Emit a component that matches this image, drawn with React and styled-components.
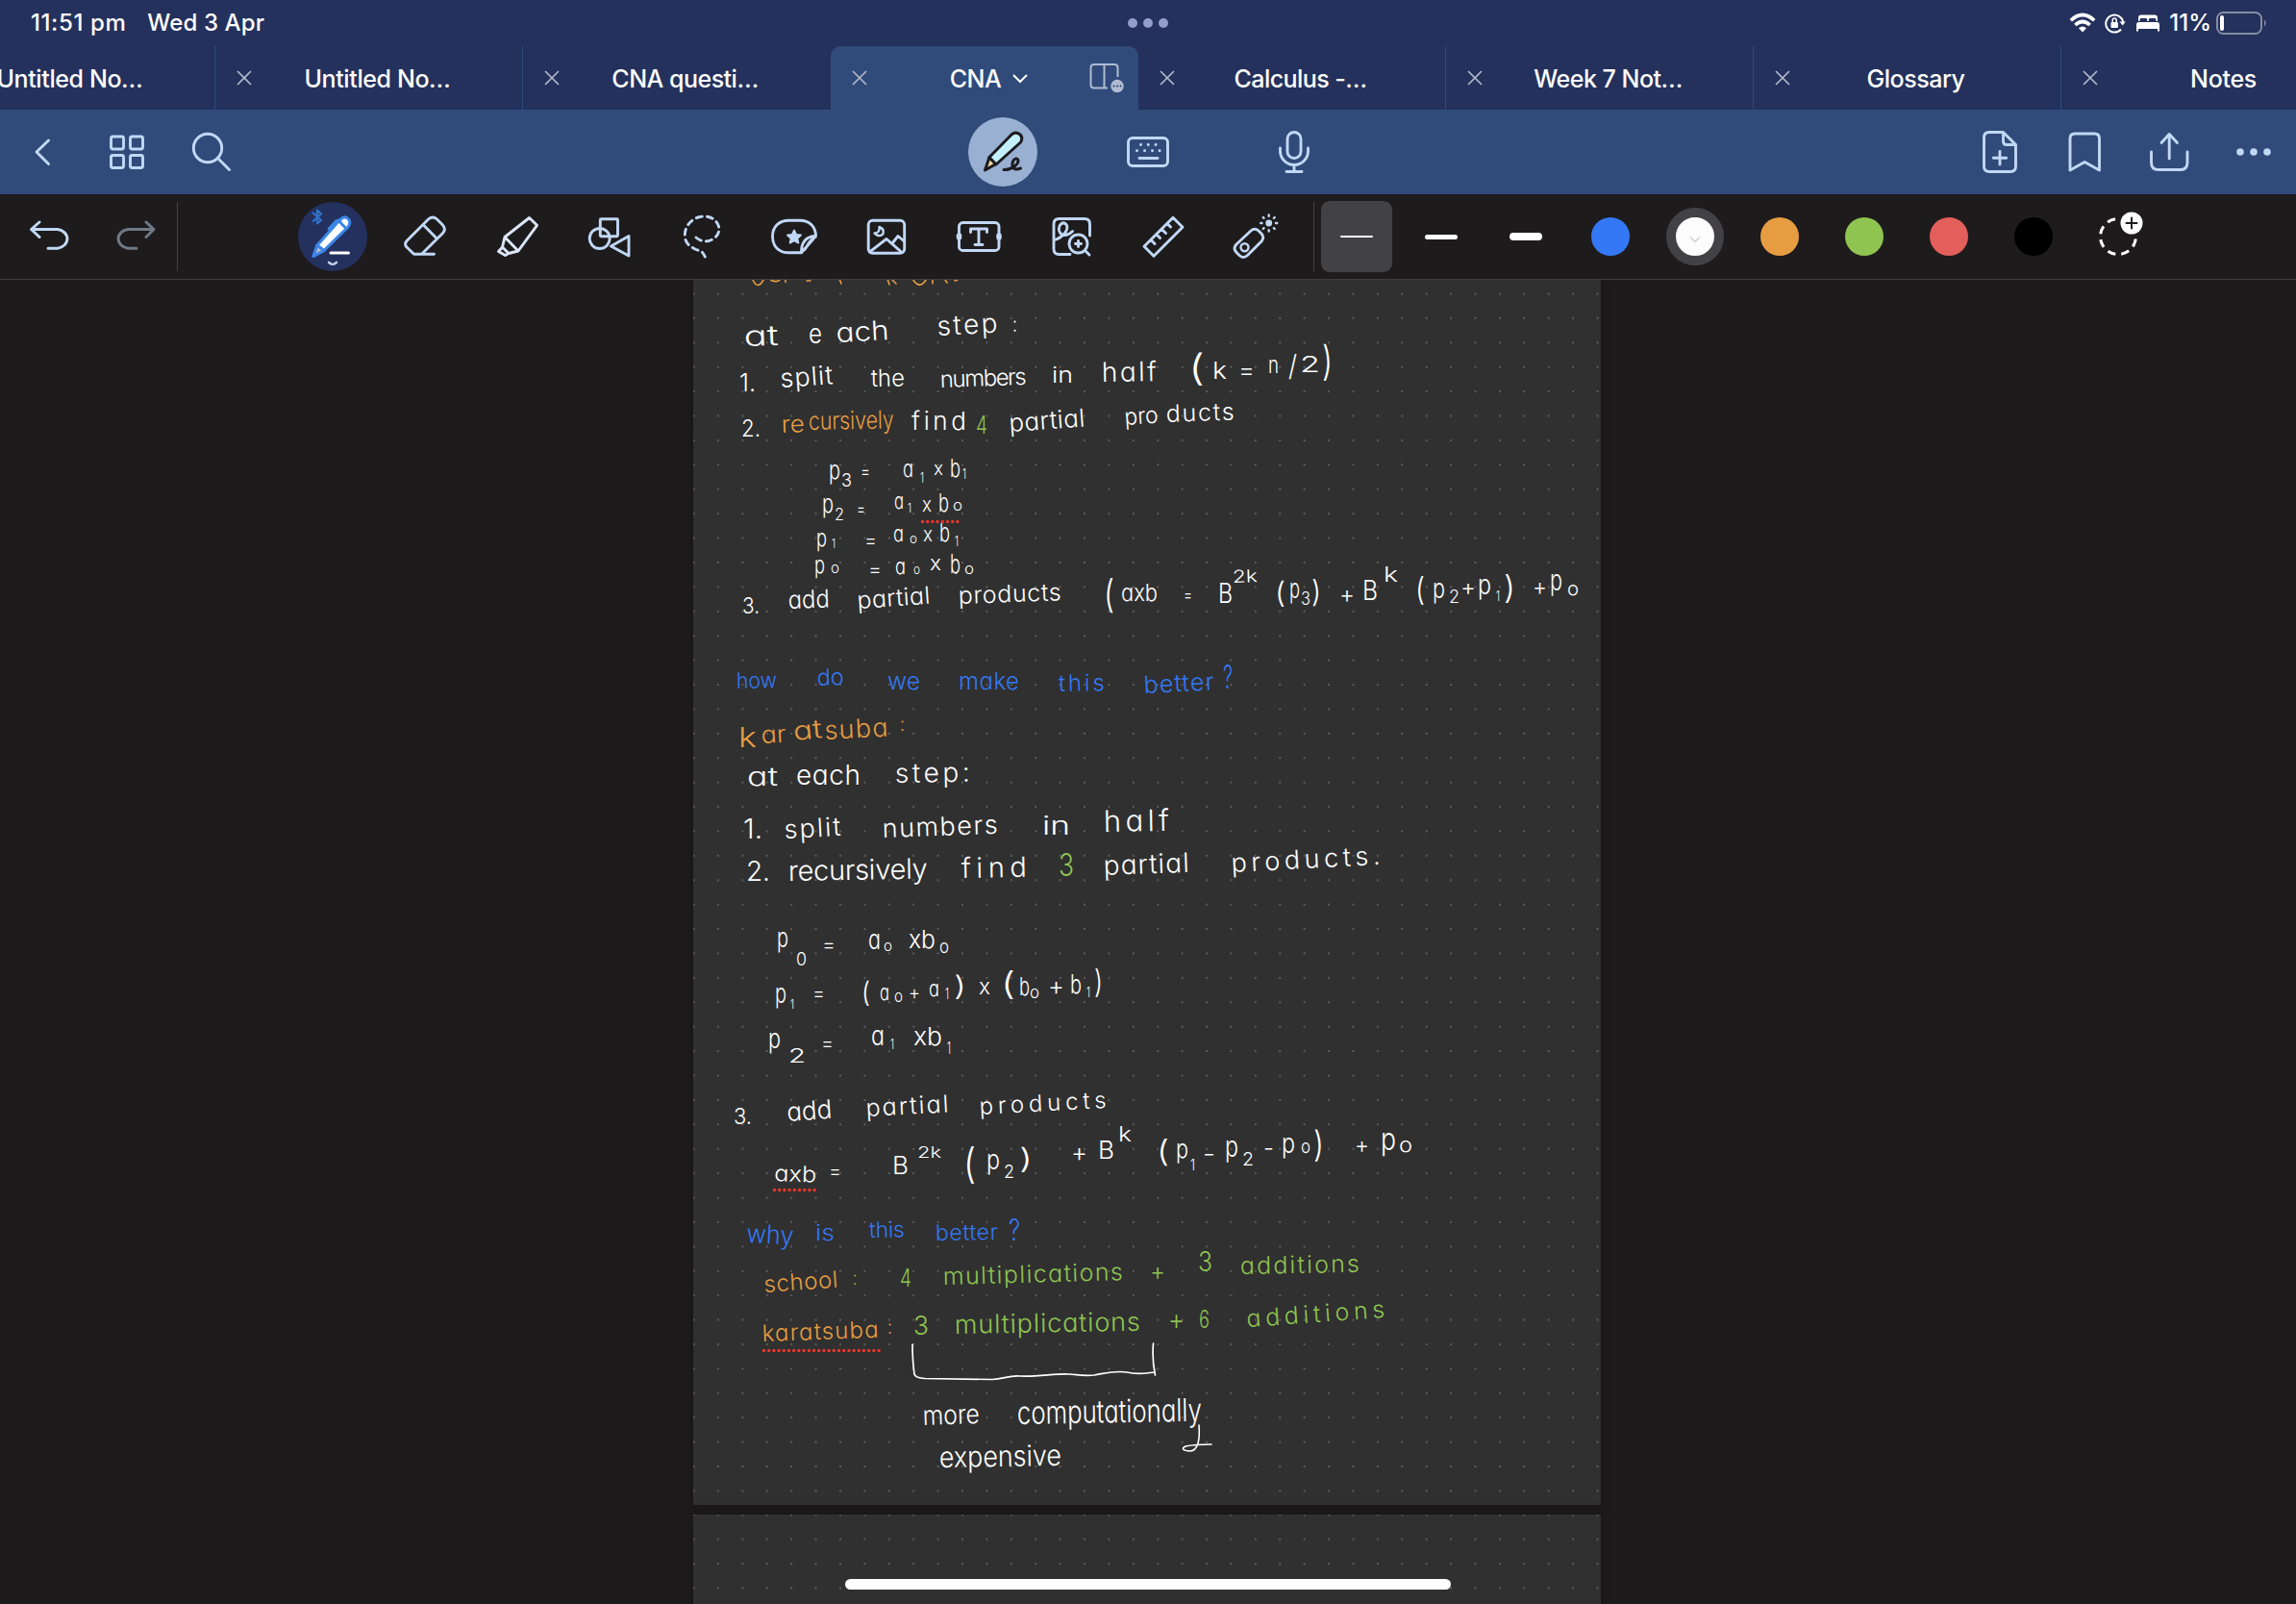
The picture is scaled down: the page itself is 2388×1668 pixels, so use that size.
import React from "react";
import styled, { createGlobalStyle, css } from "styled-components";

const c = {
  navy: "#24315c",
  blue: "#304b7a",
  dark: "#1e1b1c",
  page: "#303030",
  ice: "#c1d8f5",
  white: "#fdfdfd",
  inkBlue: "#3478f5",
  orange: "#e69d42",
  green: "#8fc450",
  red: "#e35f5b",
};

const Global = createGlobalStyle`
  html, body { margin: 0; background: ${c.dark}; }
  * { box-sizing: border-box; }
  svg { display: block; }
`;

const Screen = styled.div`
  width: 2388px;
  height: 1668px;
  display: flex;
  flex-direction: column;
  overflow: hidden;
  background: ${c.dark};
  color: #fff;
  font-family: Inter, "Liberation Sans", sans-serif;
`;

/* ---------- status bar ---------- */
const StatusBar = styled.header`
  height: 48px;
  flex: none;
  display: grid;
  grid-template-columns: 1fr auto 1fr;
  align-items: center;
  background: ${c.navy};
  padding: 0 29px 0 32px;
  font-size: 24px;
  font-weight: 500;
  line-height: 48px;
`;
const Clock = styled.div`
  display: flex;
  gap: 22px;
  white-space: nowrap;
`;
const Time = styled.span`
  letter-spacing: ${(p) => p.$track || 0}px;
`;
const Multitask = styled.div`
  display: flex;
  gap: 6px;
  transform: translateX(-2px);
`;
const TaskDot = styled.i`
  width: 10px;
  height: 10px;
  border-radius: 50%;
  background: #959dcb;
`;
const Indicators = styled.div`
  display: flex;
  justify-content: flex-end;
  align-items: center;
`;
const Percent = styled.span`
  margin: 0 5px 0 9px;
`;
const Gap = styled.i`
  width: ${(p) => p.$w}px;
`;

/* ---------- tabs ---------- */
const TabStrip = styled.nav`
  height: 66px;
  flex: none;
  display: flex;
  margin-left: -96px;
  background: ${c.navy};
`;
const TabBox = styled.div`
  width: 320px;
  flex: none;
  display: flex;
  align-items: center;
  border-right: ${(p) => (p.$line ? "1px solid #2f4b7a" : "1px solid transparent")};
  ${(p) =>
    p.$active &&
    css`
      background: ${c.blue};
      border-radius: 10px 10px 0 0;
      border-right: 0;
    `}
`;
const Close = styled.div`
  width: 60px;
  display: flex;
  justify-content: center;
`;
const Title = styled.div`
  flex: 1;
  display: flex;
  align-items: center;
  justify-content: center;
  gap: 12px;
  padding: 2px ${(p) => (p.$active ? 0 : 42)}px 0 0;
  font-size: 25px;
  font-weight: 500;
  letter-spacing: ${(p) => p.$track}px;
  white-space: nowrap;
`;
const PanelSlot = styled.div`
  width: 51px;
  padding-top: 1px;
`;

/* ---------- navigation bar ---------- */
const NavBar = styled.div`
  height: 88px;
  flex: none;
  display: grid;
  grid-template-columns: 1fr auto 1fr;
  align-items: center;
  background: ${c.blue};
  color: ${c.ice};
`;
const NavGroup = styled.div`
  display: flex;
  justify-content: ${(p) => p.$align || "flex-start"};
`;
const Cell = styled.button`
  width: ${(p) => p.$w}px;
  height: 74px;
  padding: 0;
  border: 0;
  background: none;
  color: inherit;
  display: flex;
  align-items: center;
  justify-content: center;
`;
const Halo = styled.span`
  width: 72px;
  height: 72px;
  border-radius: 50%;
  background: ${(p) => p.$bg};
`;

/* ---------- tool bar ---------- */
const ToolBar = styled.div`
  height: 89px;
  flex: none;
  display: flex;
  align-items: center;
  background: ${c.dark};
  border-bottom: 1px solid #3f3d3e;
  color: ${c.ice};
`;
const History = styled.div`
  display: flex;
  width: 184px;
  padding-left: 8px;
`;
const Rule = styled.i`
  width: 1px;
  height: 72px;
  background: #434142;
`;
const Tools = styled.div`
  display: flex;
  padding: 0 12px 0 113px;
`;
const Stroke = styled.i`
  width: 34px;
  height: ${(p) => p.$h}px;
  border-radius: ${(p) => p.$h / 2}px;
  background: #fff;
`;
const StrokeSlot = styled.span`
  width: 74px;
  height: 74px;
  border-radius: 9px;
  display: flex;
  align-items: center;
  justify-content: center;
  background: ${(p) => (p.$on ? "#424143" : "transparent")};
`;
const Swatch = styled.span`
  width: ${(p) => (p.$on ? 60 : 40)}px;
  height: ${(p) => (p.$on ? 60 : 40)}px;
  border-radius: 50%;
  border: ${(p) => (p.$on ? "10px solid #424244" : "0")};
  background: ${(p) => p.$color};
  display: flex;
  align-items: center;
  justify-content: center;
`;

/* ---------- notebook ---------- */
const Canvas = styled.main`
  flex: 1;
  position: relative;
  display: flex;
  flex-direction: column;
  align-items: center;
  gap: 10px;
  overflow: hidden;
  padding-right: 2px;
`;
const Sheet = styled.section`
  width: 944px;
  height: ${(p) => p.$h}px;
  flex: none;
  background-color: ${c.page};
  background-image: radial-gradient(circle, #626262 0.6px, transparent 1.5px);
  background-size: 25.41px 25.41px;
  background-position: -12.2px ${(p) => p.$dotY}px;
  box-shadow: 0 0 12px rgba(0, 0, 0, 0.25);
`;
const HomeBar = styled.i`
  position: absolute;
  left: 879px;
  bottom: 15px;
  width: 630px;
  height: 11px;
  border-radius: 6px;
  background: #fff;
`;
const Ink = styled.svg`
  font-family: Inter, "Liberation Sans", sans-serif;
  font-weight: 300;
  font-feature-settings: "cv11", "kern";
`;

/* Each word: text, left, baseline, width, size, slope */
const white = [
  ["at", 774, 360, 36, 29, -2], ["e", 841, 357, 14, 28], ["ach", 870, 356, 55, 28, -3],
  ["step", 975, 349, 63, 28, -3], [":", 1053, 345, 5, 22],
  ["1.", 769, 407, 17, 26], ["split", 812, 403, 55, 27, -4], ["the", 906, 402, 35, 25, -1],
  ["numbers", 978, 403, 90, 24, -2], ["in", 1094, 398, 22, 23], ["half", 1146, 397, 57, 28, -1],
  ["(", 1236, 396, 17, 38], ["k", 1261, 394, 15, 24], ["=", 1288, 394, 17, 26], ["n", 1319, 388, 11, 24],
  ["/", 1340, 391, 9, 30], ["2", 1352, 387, 21, 23], [")", 1375, 390, 11, 42],
  ["2.", 771, 454, 20, 24], ["find", 948, 447, 57, 26], ["partial", 1050, 449, 79, 26, -4],
  ["pro", 1170, 442, 35, 24, -4], ["ducts", 1213, 439, 71, 25, -2],
  ["p", 862, 498, 12, 26], ["3", 875, 506, 11, 19], ["=", 895, 497, 10, 20], ["a", 939, 496, 11, 24],
  ["1", 957, 502, 4, 14], ["x", 971, 494, 10, 20], ["b", 988, 496, 11, 26], ["1", 1001, 498, 4, 14],
  ["p", 855, 533, 12, 26], ["2", 868, 541, 10, 17], ["=", 891, 536, 9, 20], ["a", 930, 529, 10, 23],
  ["1", 944, 533, 4, 13], ["x", 959, 532, 10, 22], ["b", 976, 532, 11, 26], ["o", 991, 531, 10, 16],
  ["p", 849, 568, 11, 25], ["1", 865, 570, 4, 13], ["=", 899, 569, 13, 21], ["a", 929, 563, 11, 23],
  ["o", 946, 565, 8, 14], ["x", 960, 563, 10, 21], ["b", 977, 563, 11, 26], ["1", 993, 568, 4, 15],
  ["p", 847, 596, 11, 25], ["o", 864, 596, 9, 16], ["=", 903, 599, 14, 20], ["a", 931, 597, 11, 23],
  ["o", 950, 597, 7, 14], ["x", 967, 593, 12, 22], ["b", 988, 596, 11, 27], ["o", 1003, 597, 10, 16],
  ["3.", 772, 638, 18, 23], ["add", 820, 633, 43, 26, -2], ["partial", 892, 633, 76, 25, -4],
  ["products", 997, 628, 107, 25, -2], ["(", 1148, 632, 11, 40], ["axb", 1166, 625, 38, 24],
  ["=", 1231, 625, 9, 19], ["B", 1267, 627, 15, 28], ["2k", 1282, 606, 26, 18, -2], ["(", 1326, 627, 11, 30],
  ["p", 1341, 622, 11, 28], ["3", 1353, 629, 10, 18], [")", 1364, 626, 10, 31], ["+", 1393, 627, 16, 25],
  ["B", 1417, 624, 16, 28], ["k", 1439, 605, 15, 21], ["(", 1472, 624, 10, 33], ["p", 1490, 622, 13, 28],
  ["2", 1507, 627, 11, 18], ["+", 1519, 619, 16, 24], ["p", 1537, 618, 14, 29], ["1", 1556, 625, 4, 15],
  [")", 1564, 622, 12, 33], ["+", 1594, 619, 15, 25], ["p", 1612, 614, 13, 30], ["o", 1630, 619, 12, 20],

  ["at", 777, 817, 32, 26], ["each", 828, 816, 67, 28], ["step:", 931, 814, 78, 28, -1],
  ["1.", 773, 872, 20, 29], ["split", 816, 872, 59, 27, -3], ["numbers", 918, 871, 120, 27, -2],
  ["in", 1084, 868, 29, 26], ["half", 1148, 865, 68, 31, -1],
  ["2.", 776, 916, 25, 28], ["recursively", 820, 916, 145, 29, -1], ["find", 1000, 913, 68, 29, -1],
  ["partial", 1148, 910, 89, 28, -2], ["products.", 1281, 907, 155, 27, -3],
  ["p", 808, 985, 12, 28], ["0", 828, 1004, 11, 19], ["=", 855, 990, 14, 22], ["a", 903, 987, 13, 28],
  ["o", 919, 989, 9, 15], ["xb", 945, 986, 28, 26], ["o", 977, 991, 10, 19],
  ["p", 806, 1043, 12, 28], ["1", 822, 1049, 4, 13], ["=", 845, 1040, 13, 21], ["(", 896, 1042, 9, 29],
  ["a", 915, 1040, 10, 23], ["o", 930, 1042, 9, 18], ["+", 945, 1039, 12, 21], ["a", 966, 1036, 11, 23],
  ["1", 983, 1039, 4, 16], [")", 992, 1035, 13, 28], ["x", 1018, 1034, 12, 23], ["(", 1041, 1034, 15, 33],
  ["b", 1060, 1035, 11, 26], ["o", 1071, 1038, 10, 18], ["+", 1090, 1035, 17, 27], ["b", 1113, 1033, 12, 27],
  ["1", 1130, 1037, 4, 15], [")", 1138, 1032, 9, 33],
  ["p", 799, 1090, 13, 28], ["2", 820, 1105, 18, 20], ["=", 854, 1092, 13, 21], ["a", 906, 1087, 14, 29],
  ["1", 926, 1091, 4, 14], ["xb", 950, 1087, 30, 26], ["1", 985, 1096, 4, 17],

  ["3.", 763, 1169, 19, 23], ["add", 819, 1166, 47, 27, -4], ["partial", 901, 1161, 86, 25, -3],
  ["products", 1019, 1159, 132, 24, -3], ["axb", 805, 1228, 44, 23, 2], ["=", 862, 1225, 13, 21],
  ["B", 928, 1221, 17, 25], ["2k", 954, 1204, 25, 16], ["(", 1002, 1225, 13, 43], ["p", 1026, 1216, 14, 29],
  ["2", 1044, 1225, 11, 19], [")", 1060, 1215, 14, 29], ["+", 1114, 1208, 17, 27], ["B", 1142, 1205, 17, 26],
  ["k", 1163, 1187, 14, 21], ["(", 1203, 1208, 13, 31], ["p", 1223, 1204, 13, 27], ["1", 1238, 1217, 5, 16],
  ["-", 1251, 1208, 13, 24], ["p", 1274, 1203, 14, 30], ["2", 1292, 1212, 12, 19], ["-", 1314, 1202, 11, 24],
  ["p", 1333, 1199, 14, 29], ["o", 1353, 1199, 10, 19], [")", 1366, 1203, 11, 37], ["+", 1409, 1199, 15, 24],
  ["p", 1436, 1196, 16, 33], ["o", 1455, 1198, 14, 21],
  ["more", 960, 1482, 59, 28, -2], ["computationally", 1058, 1481, 192, 33, -1],
  ["expensive", 977, 1526, 127, 30, -1],
];
const blue = [
  ["how", 766, 716, 42, 23, -1], ["do", 850, 713, 28, 24, -2], ["we", 923, 717, 34, 25], ["make", 997, 717, 63, 24],
  ["this", 1101, 719, 48, 24, -1], ["better", 1190, 721, 73, 25, -3], ["?", 1272, 716, 10, 34],
  ["why", 776, 1292, 49, 27, 3], ["is", 848, 1290, 20, 23], ["this", 904, 1287, 37, 23, -1],
  ["better", 973, 1290, 65, 23, -1], ["?", 1049, 1290, 12, 31],
];
const orange = [
  ["re", 813, 450, 24, 25, -2], ["cursively", 841, 447, 89, 26, -1],
  ["k", 768, 777, 19, 29], ["ar", 792, 773, 26, 25, -3], ["at", 826, 770, 30, 27, -6], ["suba", 858, 769, 66, 27, -3], [":", 936, 760, 5, 20],
  ["school", 795, 1344, 77, 24, -4], [":", 887, 1336, 4, 20],
  ["karatsuba", 793, 1395, 121, 24, -2], [":", 923, 1387, 5, 20],
];
const green = [
  ["4", 1015, 451, 12, 26],
  ["3", 1101, 911, 16, 33],
  ["4", 936, 1338, 12, 26], ["multiplications", 981, 1336, 187, 25, -1.5], ["+", 1196, 1331, 16, 26],
  ["3", 1246, 1322, 15, 28], ["additions", 1290, 1325, 124, 25, -1],
  ["3", 950, 1388, 16, 27], ["multiplications", 993, 1387, 193, 27, -1], ["+", 1215, 1383, 17, 30],
  ["6", 1247, 1381, 11, 25], ["additions", 1297, 1380, 144, 25, -4],
];

const stretched = ["more", "computationally", "expensive", "cursively"];
function Word({ w }) {
  const [text, x, y, width, size, slope = 0] = w;
  const stretch = text.length <= 3 || stretched.includes(text);
  return (
    <text
      x={x}
      y={y}
      fontSize={size}
      textLength={width}
      lengthAdjust={stretch ? "spacingAndGlyphs" : "spacing"}
      transform={slope ? `rotate(${slope} ${x} ${y})` : undefined}
    >
      {text}
    </text>
  );
}
const Words = ({ list, color }) => (
  <g fill={color}>{list.map((w, i) => <Word key={i} w={w} />)}</g>
);

function Handwriting() {
  return (
    <Ink width="944" height="1274" viewBox="721 291 944 1274">
      <g fill="none" strokeLinecap="round" strokeLinejoin="round">
        <path stroke={c.orange} strokeWidth="1.6" d="M783 291Q788 302 794 291M802 291.500Q808 294 811 291M817 290v3.500M839 292h4M873 290l2 5M923 290l2 6M928 291l4 4M950 291.500Q957 301 963 291M970 291v4M983 291l2 3M993 292l3-1" />
        <path stroke="#fff" strokeWidth="1.7" d="M949 1398Q949 1415 951 1429Q952 1433 962 1433.500L1032 1434.500C1044 1434 1048 1430.500 1060 1431C1080 1432 1098 1428 1112 1429C1124 1430 1128 1431 1138 1430C1150 1428 1160 1425 1172 1427C1184 1430 1190 1428 1201 1427M1199.500 1397Q1198 1414 1201.500 1430" />
        <path stroke="#fff" strokeWidth="1.6" d="M1247 1482Q1249 1508 1238 1509Q1226 1508 1233 1504Q1242 1502 1260 1502" />
        <path stroke="#f0352b" strokeWidth="3.400" strokeDasharray="0 5.200" d="M959.500 542.500H998M805.500 1237.500H849M794.500 1404.500H915" />
      </g>
      <Words list={white} color="#fff" />
      <Words list={blue} color={c.inkBlue} />
      <Words list={orange} color={c.orange} />
      <Words list={green} color={c.green} />
    </Ink>
  );
}

/* ---------- icons ---------- */
const I = ({ children, w = 2.9, s = 72, color = "currentColor" }) => (
  <svg width={s} height={s} viewBox="0 0 72 72" fill="none" stroke={color} strokeWidth={w} strokeLinecap="round" strokeLinejoin="round">
    {children}
  </svg>
);
const CloseIcon = () => (
  <svg width="16" height="16" viewBox="0 0 16 16" stroke="#b3b8ca" strokeWidth="1.7" strokeLinecap="round"><path d="M1.500 1.500l13 13M14.500 1.500l-13 13" /></svg>
);
const Wifi = () => (
  <svg width="28" height="22" viewBox="0 0 28 22" fill="none" stroke="#fff" strokeWidth="3.600">
    <path d="M1.800 8.300Q14-3.300 26.200 8.300M6.400 13Q14 6 21.600 13" />
    <path d="M14 20.500l-4-4.200q4-3.400 8 0z" fill="#fff" stroke="none" />
  </svg>
);
const RotationLock = () => (
  <svg width="22" height="22" viewBox="0 0 22 22" fill="none" stroke="#fff" strokeWidth="2">
    <path d="M17 17.500a9 9 0 1 1 2.200-7" /><path d="M15.500 9.500h6.300l-3.100 4z" fill="#fff" stroke="none" />
    <rect x="6.500" y="10" width="7.400" height="6" rx="1" fill="#fff" stroke="none" /><path d="M8.200 10V8a2 2 0 0 1 4 0v2" strokeWidth="1.500" />
  </svg>
);
const Bed = () => (
  <svg width="26" height="20" viewBox="0 0 26 20" fill="#fff">
    <path d="M3 8V4.500Q3 1.500 6 1.500H20Q23 1.500 23 4.500V8H21.500V6.500Q21.500 5 20 5H15Q13.800 5 13.800 6.500V8H12.200V6.500Q12.200 5 11 5H6Q4.500 5 4.500 6.500V8Z" />
    <path d="M1 11.500Q1 9 3.500 9H22.500Q25 9 25 11.500V18.500H23V16H3V18.500H1Z" />
  </svg>
);
const Battery = () => (
  <svg width="54" height="26" viewBox="0 0 54 26" fill="none">
    <rect x="1" y="2" width="46" height="22" rx="6.500" stroke="#858ca6" strokeWidth="2" />
    <rect x="4" y="5" width="4" height="16" rx="2" fill="#fff" />
    <path d="M50 9.500q3.500 3.500 0 7z" fill="#858ca6" />
  </svg>
);
const PanelIcon = () => (
  <svg width="38" height="34" viewBox="0 0 38 34" fill="none" stroke="#b0bbd0" strokeWidth="2">
    <path d="M19 26.500H5Q1.500 26.500 1.500 23V5.500Q1.500 2 5 2H26Q29.500 2 29.500 5.500V15M15.500 2V26.500" />
    <circle cx="29" cy="24.500" r="6.700" fill="#b0bbd0" stroke="none" />
    <path d="M25.500 24.500h.1M29 24.500h.1M32.500 24.500h.1" stroke={c.blue} strokeLinecap="round" strokeWidth="2" />
  </svg>
);
const navLeft = [
  <I><path d="M42.500 24L30 36 42.500 48.500" /></I>,
  <I><rect x="19.500" y="20" width="13" height="13" rx="2" /><rect x="39.500" y="20" width="13" height="13" rx="2" /><rect x="19.500" y="39.500" width="13" height="13" rx="2" /><rect x="39.500" y="39.500" width="13" height="13" rx="2" /></I>,
  <I><circle cx="32" cy="32" r="14.700" /><path d="M42.500 42.500L54.500 54.500" /></I>,
];
const navRight = [
  <I><path d="M39 15.500H25Q19.500 15.500 19.500 21V51Q19.500 56.500 25 56.500H47Q52.500 56.500 52.500 51V28.500L39.500 15.500V25Q39.500 28.500 43 28.500H52.500M36 35.500V49M29.300 42.200H42.700" /></I>,
  <I><path d="M21 55V22Q21 17 26 17H46.500Q51.500 17 51.500 22V55L36.200 46.500Z" /></I>,
  <I><path d="M17.500 36V47Q17.500 54.500 25 54.500H47.500Q55 54.500 55 47V36M36.200 43V18M28 26.500L36.200 17.500 44.500 26.500" /></I>,
  <I><g fill="currentColor" stroke="none"><circle cx="22" cy="36" r="3.800" /><circle cx="36" cy="36" r="3.800" /><circle cx="50" cy="36" r="3.800" /></g></I>,
];
const PenMode = () => (
  <I w={3} color="#1d1b20">
    <path d="M17.500 55L22 41.500 28.800 48.500Z" fill="#f0d6a0" />
    <path d="M22 41.500L45 18Q49 14.500 53.500 17.500 57.500 21 54.500 26L29 49Z" fill="#c3f0fc" />
    <path d="M46 52C50 50.500 52.500 47 52 44.500 51 41.500 46.500 43 46 48 45.500 53 48 55.500 54.500 53M37 54.500Q43 54.500 46 52" />
  </I>
);
const KeyboardIcon = () => (
  <I><rect x="15.500" y="21.500" width="41" height="29" rx="4.500" /><path d="M27 42.500H46" /><path d="M28.500 28.500h.1M36.200 28.500h.1M44 28.500h.1M24.500 34.700h.1M32.500 34.700h.1M40.500 34.700h.1M48 34.700h.1" /></I>
);
const Mic = () => (
  <I><rect x="29" y="15.500" width="14" height="27" rx="7" /><path d="M21.500 32V35A14.500 14.500 0 0 0 50.500 35V32M36 50V56M28 56.500H44" /></I>
);
const Pen = () => (
  <I w={3} color="#3b86e8">
    <path d="M15.700 11.500L24 19 20 22.500V8.500L24 12.500 15.700 20" strokeWidth="2.200" stroke="#2f72c8" />
    <path d="M16 56.500L20 45 44 18Q48.500 14 52 17.500 55.500 21 52 26L27 50.500Z" fill="#fff" />
    <path d="M16 56.500L20 45 27 50.500Z" fill="#b9bcc6" />
    <path d="M43 20.500L50 27.500" /><path d="M32 28L39.500 20Q42 18.500 44 20" strokeWidth="3" />
    <path d="M34 53H52.500" stroke="#fff" /><path d="M32 62.800Q36 67 40 62.800" stroke={c.ice} strokeWidth="2.400" />
  </I>
);
const tools = [
  <I><path d="M45.500 54.300H24.500L16.500 46.500Q14.500 43.500 17 40.500L39.500 18Q44 14 48.500 18L54 23.500Q58.500 28 54.500 32.500L32.500 54.300M34.700 24.300L48.500 38.300" /></I>,
  <I color="#dbe7f8"><path d="M48.500 16.500L56.500 24.300 37 51 27 53.500 23.500 55.500 16.500 51.500 20.500 47 23 36.500ZM23 36.500L37 51M20.500 47L27 53.500" /></I>,
  <I><rect x="26.300" y="17.700" width="18.200" height="18" rx="1" /><circle cx="25.700" cy="38" r="10.500" /><path d="M56 35.500V56L37.500 46Z" /></I>,
  <I><path d="M30 37Q36 42 43 40.500C52 38 55 31 53.500 25.500 51 17 42 13.500 34 15.500 23 18 17 28 18.500 37.500 20 44 24 46.500 30 49.500 37 52 37 52 39.300 57" strokeDasharray="6 5.200" /></I>,
  <I><path d="M43.500 52.800H30.500C20 52.800 13.500 46 13.500 36S20 19.200 30.500 19.200H42C52 19.200 58.500 26 58.500 35.500Z M43.500 52.800C43 43 48 35.500 58.500 35.500M45 51C51 48 48 42 58 36.500" /><path d="M36 29.500L38.100 33.900 43 34.500 39.400 37.800 40.400 42.600 36 40.200 31.600 42.600 32.600 37.800 29 34.500 33.900 33.900Z" fill="currentColor" strokeWidth="1.800" /></I>,
  <I><rect x="17.200" y="19.200" width="37.500" height="34" rx="4.500" /><path d="M18.500 52L36 38.500 52 52.500M42 43L48 35.500 54.500 41" /><path d="M28.500 26Q34 28 32.500 33 29 37.500 23.500 32.500 29.500 32 28.500 26Z" strokeWidth="2.400" /></I>,
  <I><rect x="15.500" y="21.500" width="41.500" height="29" rx="4" /><path d="M15.500 35v2M57 35v2" strokeWidth="5.500" /><path d="M27.500 31.500V28H44.500V31.500M36 28V44.500M32 44.500H40" /></I>,
  <I><path d="M55.500 35V23Q55.500 17.500 50 17.500H23.500Q18 17.500 18 23V49Q18 54.500 23.500 54.500H35M19 39.500C29 36 34 28 31 23.500 27.500 19.500 22.500 24 23.500 29.500 25 36 32 36 37.500 30.500" /><circle cx="43.500" cy="43.500" r="9.500" /><path d="M50.500 50.500L55 55" /><path d="M43.500 40.500v6M40.500 43.500h6" /></I>,
  <I><path d="M46 16.200L56 26.200 26 56.200 16 46.200ZM23 39.500L27 43.500M29 34L32.500 37.500M34.500 28.500L38.500 32.500M40 22.500L43.500 26" /></I>,
  <I><path d="M31 30Q35 26.500 39 30L42 33Q45.500 37 42 41L27.500 55.500Q23 59.500 19 55.500L16 52.500Q12 48.500 16 44Z" /><circle cx="24.500" cy="47.300" r="4" strokeWidth="2.500" /><circle cx="49.700" cy="22" r="3.400" fill="currentColor" stroke="none" /><path d="M49.700 13.500v1.200M49.700 29.300v1.200M41.200 22h1.200M57 22h1.200M43.700 16l.8.8M54.900 27.200l.8.8M43.700 28l.8-.8M54.900 16.800l.8-.8" strokeWidth="2.400" /></I>,
];
const Undo = () => <I w={3}><path d="M25 21L16.500 28.500 25 36.500M17 28.500H44A12 10 0 0 1 44 48.200H34" /></I>;
const Redo = () => <I w={3} color="#6e7987"><path d="M48 21L56 28.500 48 36.500M55 28.500H29A12 10 0 0 0 29 48.200H38" /></I>;
const AddColor = () => (
  <I color="#fff" w={3}>
    <circle cx="36" cy="36" r="18.500" strokeDasharray="8.500 6" strokeLinecap="butt" transform="rotate(8 36 36)" />
    <circle cx="50" cy="22" r="13" fill={c.dark} stroke="none" /><circle cx="50" cy="22" r="11.500" fill="#fff" stroke="none" />
    <path d="M50 16.500v11M44.500 22h11" stroke="#1e1b1c" strokeWidth="2" />
  </I>
);

const tabs = [
  { t: "Untitled No…", k: -0.4, line: true },
  { t: "Untitled No…", k: -0.4, line: true },
  { t: "CNA questi…", k: -0.5 },
  { t: "CNA", k: -0.5, active: true },
  { t: "Calculus -…", k: -0.55, line: true },
  { t: "Week 7 Not…", k: -0.5, line: true },
  { t: "Glossary", k: -0.45, line: true },
  { t: "Notes", k: -0.3 },
];
const swatches = [c.inkBlue, c.white, c.orange, c.green, c.red, "#000"];

export default function App() {
  return (
    <Screen>
      <Global />
      <StatusBar>
        <Clock><Time $track={0.6}>11:51 pm</Time><Time $track={0.1}>Wed 3 Apr</Time></Clock>
        <Multitask><TaskDot /><TaskDot /><TaskDot /></Multitask>
        <Indicators>
          <Wifi /><Gap $w={9} /><RotationLock /><Gap $w={10} /><Bed />
          <Percent>11%</Percent><Battery />
        </Indicators>
      </StatusBar>
      <TabStrip>
        {tabs.map((tab, i) => (
          <TabBox key={i} $active={tab.active} $line={tab.line}>
            <Close><CloseIcon /></Close>
            <Title $active={tab.active} $track={tab.k}>
              {tab.t}
              {tab.active && <svg width="16" height="10" viewBox="0 0 16 10" fill="none" stroke="#fff" strokeWidth="2" strokeLinecap="round"><path d="M1.500 1.500L8 8 14.500 1.500" /></svg>}
            </Title>
            {tab.active && <PanelSlot><PanelIcon /></PanelSlot>}
          </TabBox>
        ))}
      </TabStrip>
      <NavBar>
        <NavGroup>{navLeft.map((icon, i) => <Cell key={i} $w={88}>{icon}</Cell>)}</NavGroup>
        <NavGroup>
          <Cell $w={151.5}><Halo $bg="#9ab0d3"><PenMode /></Halo></Cell>
          <Cell $w={151.5}><KeyboardIcon /></Cell>
          <Cell $w={151.5}><Mic /></Cell>
        </NavGroup>
        <NavGroup $align="flex-end">{navRight.map((icon, i) => <Cell key={i} $w={88}>{icon}</Cell>)}</NavGroup>
      </NavBar>
      <ToolBar>
        <History><Cell $w={88}><Undo /></Cell><Cell $w={88}><Redo /></Cell></History>
        <Rule />
        <Tools>
          <Cell $w={96}><Halo $bg="#24315e"><Pen /></Halo></Cell>
          {tools.map((icon, i) => <Cell key={i} $w={96}>{icon}</Cell>)}
        </Tools>
        <Rule />
        {[2, 5, 8].map((h) => (
          <Cell key={h} $w={88}><StrokeSlot $on={h === 2}><Stroke $h={h} /></StrokeSlot></Cell>
        ))}
        {swatches.map((color, i) => (
          <Cell key={color} $w={88}>
            <Swatch $color={color} $on={i === 1}>
              {i === 1 && <svg width="12" height="16" viewBox="0 0 12 16" fill="none" stroke="#a8a8a8"><path d="M1 8.500l5 5 5-5" /></svg>}
            </Swatch>
          </Cell>
        ))}
        <Cell $w={88}><AddColor /></Cell>
      </ToolBar>
      <Canvas>
        <Sheet $h={1274} $dotY={1.8}><Handwriting /></Sheet>
        <Sheet $h={120} $dotY={-12.4} />
        <HomeBar />
      </Canvas>
    </Screen>
  );
}
